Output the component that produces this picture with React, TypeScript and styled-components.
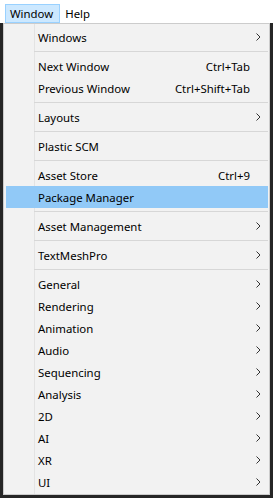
import * as React from "react";
import styled, { createGlobalStyle } from "styled-components";

const GlobalStyle = createGlobalStyle`
  html, body {
    margin: 0;
    padding: 0;
    background: #262626;
    height: 100%;
  }
  body {
    font-family: "Noto Sans", "Open Sans", sans-serif;
    font-size: 11.4px;
    color: #000;
  }
`;

const SPage = styled.div`
  width: 273px;
  height: 498px;
  background: #262626;
  overflow: hidden;
`;

const SMenuBar = styled.div`
  display: flex;
  align-items: flex-start;
  height: 23px;
  padding: 4px 0 0 5px;
  box-sizing: border-box;
  background: #ffffff;
`;

const SBarItem = styled.div<{ open?: boolean }>`
  height: 19px;
  box-sizing: border-box;
  padding: 0 6px 0 4px;
  display: flex;
  align-items: center;
  border: 1px solid ${({ open }) => (open ? "#99d1ff" : "transparent")};
  background: ${({ open }) => (open ? "#cce8ff" : "transparent")};
`;

const SDropdown = styled.div`
  margin-left: 3px;
  width: 267px;
  box-sizing: border-box;
  border: 1px solid #cccccc;
  padding: 2px 1px 1px 2px;
  background:
    linear-gradient(#e3e3e3, #e3e3e3) 30px 0 / 1px 100% no-repeat,
    #f2f2f2;
`;

const SRow = styled.div<{ active?: boolean }>`
  display: flex;
  align-items: center;
  height: 22px;
  padding-left: 32px;
  background: ${({ active }) => (active ? "#91c9f7" : "transparent")};
`;

const SLabel = styled.span`
  flex: 1;
  white-space: nowrap;
`;

const SShortcut = styled.span`
  white-space: nowrap;
`;

const SArrow = styled.span`
  width: 18px;
  box-sizing: border-box;
  display: flex;
  padding-left: 6px;
`;

const SSeparator = styled.div`
  height: 7px;
  display: flex;
  align-items: center;
  padding-left: 28px;

  &::after {
    content: "";
    flex: 1;
    height: 1px;
    background: #d7d7d7;
  }
`;

type Item =
  | { sep: true }
  | { label: string; shortcut?: string; sub?: boolean; active?: boolean; sep?: false };

const ITEMS: Item[] = [
  { label: "Windows", sub: true },
  { sep: true },
  { label: "Next Window", shortcut: "Ctrl+Tab" },
  { label: "Previous Window", shortcut: "Ctrl+Shift+Tab" },
  { sep: true },
  { label: "Layouts", sub: true },
  { sep: true },
  { label: "Plastic SCM" },
  { sep: true },
  { label: "Asset Store", shortcut: "Ctrl+9" },
  { label: "Package Manager", active: true },
  { sep: true },
  { label: "Asset Management", sub: true },
  { sep: true },
  { label: "TextMeshPro", sub: true },
  { sep: true },
  { label: "General", sub: true },
  { label: "Rendering", sub: true },
  { label: "Animation", sub: true },
  { label: "Audio", sub: true },
  { label: "Sequencing", sub: true },
  { label: "Analysis", sub: true },
  { label: "2D", sub: true },
  { label: "AI", sub: true },
  { label: "XR", sub: true },
  { label: "UI", sub: true },
];

const Chevron = () => (
  <svg width="5" height="8" viewBox="0 0 5 8">
    <polyline points="0.5,0.5 4,4 0.5,7.5" fill="none" stroke="#333" strokeWidth="1" />
  </svg>
);

export default function App() {
  return (
    <SPage>
      <GlobalStyle />
      <SMenuBar>
        <SBarItem open>Window</SBarItem>
        <SBarItem>Help</SBarItem>
      </SMenuBar>
      <SDropdown>
        {ITEMS.map((item, i) =>
          item.sep ? (
            <SSeparator key={i} />
          ) : (
            <SRow key={i} active={item.active}>
              <SLabel>{item.label}</SLabel>
              {item.shortcut && <SShortcut>{item.shortcut}</SShortcut>}
              <SArrow>{item.sub && <Chevron />}</SArrow>
            </SRow>
          )
        )}
      </SDropdown>
    </SPage>
  );
}
